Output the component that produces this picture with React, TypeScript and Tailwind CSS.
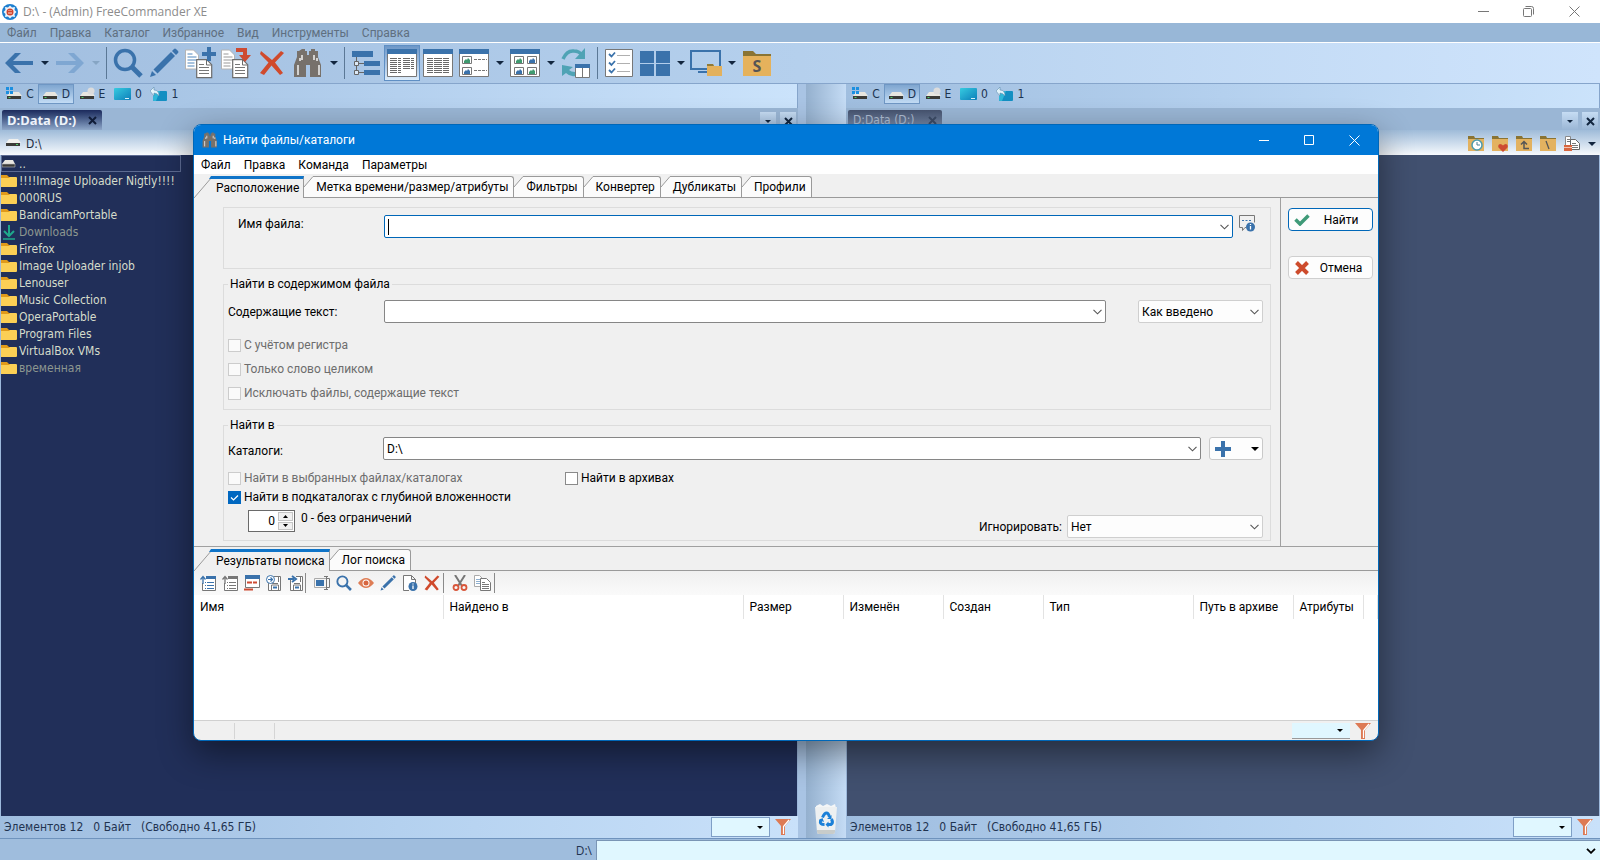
import React from 'react';
import clsx from 'clsx';

type IconProps = { className?: string };

/* ---------- small shared glyphs ---------- */

function Caret({ className = 'text-[#12263f]' }: IconProps) {
  return (
    <svg width="8" height="4" viewBox="0 0 8 4" className={className}>
      <path d="M0 0h8L4 4z" fill="currentColor" />
    </svg>
  );
}

function Chevron({ className = 'text-[#555]' }: IconProps) {
  return (
    <svg width="9" height="6" viewBox="0 0 9 6" className={className}>
      <path d="M.5.8l4 4 4-4" fill="none" stroke="currentColor" strokeWidth="1.1" />
    </svg>
  );
}

function Cross({ className }: IconProps) {
  return (
    <svg width="9" height="9" viewBox="0 0 9 9" className={className}>
      <path d="M1 1l7 7M8 1L1 8" stroke="currentColor" strokeWidth="2" />
    </svg>
  );
}

function Funnel() {
  return (
    <svg width="16" height="16" viewBox="0 0 16 16">
      <path d="M0 0h16l-6 7v9H6V7z" fill="#dd7a55" />
      <path d="M14 1L8.500 7.500V15" fill="none" stroke="#fff" strokeWidth="1.200" />
    </svg>
  );
}

function Binoculars({ size }: { size: number }) {
  return (
    <svg width={size} height={size} viewBox="0 0 30 30">
      <path
        d="M9 1h3v2h2v4h2V3h2V1h4v2h3v6l3 8v12H17V17h-4v12H1V17l3-8V3h2z"
        fill="#77716b"
      />
      <path d="M9 7v5M7 10v3M5 17v10M21 7v5M24 10v3M26 17v10" stroke="#f2f2f2" strokeWidth="1.500" />
    </svg>
  );
}

/* ---------- main toolbar icons ---------- */

function ArrowIcon({ dir, color }: { dir: 'left' | 'right'; color: string }) {
  return (
    <svg width="30" height="26" viewBox="0 0 30 26">
      <path
        d={dir === 'left' ? 'M29 11v4H9l8 8h-6L1 13 11 3h6L9 11z' : 'M1 11v4h20l-8 8h6l10-10L19 3h-6l8 8z'}
        fill={color}
      />
    </svg>
  );
}

function Magnifier({ size }: { size: number }) {
  return (
    <svg width={size} height={size} viewBox="0 0 30 30">
      <circle cx="12" cy="12" r="9.500" fill="none" stroke="#3a72ab" strokeWidth="3.500" />
      <path d="M19 19l9 9" stroke="#3a72ab" strokeWidth="5" />
    </svg>
  );
}

function Pencil({ size }: { size: number }) {
  return (
    <svg width={size} height={size} viewBox="0 0 30 30">
      <path d="M3 23l4 4-6 2zM4.500 21.500L22 4l4 4L8.500 25.500zM23 3l2-2q1-1 2 0l2 2q1 1 0 2l-2 2z" fill="#3a72ab" />
    </svg>
  );
}

function Sheet({ x, y }: { x: number; y: number }) {
  return (
    <g transform={`translate(${x} ${y})`}>
      <path d="M.7.7h10l5 5v13h-15z" fill="#fff" stroke="#6c6c6c" strokeWidth="1.200" />
      <path d="M10.500 1v5h5" fill="none" stroke="#6c6c6c" />
      <path d="M3 5.500h5M3 8.500h10M3 11.500h10M3 14.500h10" stroke="#777" />
    </g>
  );
}

function SheetsIcon({ kind }: { kind: 'copy' | 'move' }) {
  return (
    <svg width="32" height="32" viewBox="0 0 32 32">
      <path d="M1.500 3h8l5 5v14h-13z" fill="#fff" stroke="#b4b4b4" />
      <path d="M3.500 7h5M3.500 10h9M3.500 13h9M3.500 16h7M3.500 19h7" stroke={kind === 'copy' ? '#4f86bd' : '#999'} />
      <Sheet x={12} y={12} />
      {kind === 'copy' ? (
        <path d="M23 0h4v5h5v4h-5v5h-4V9h-5V5h5z" fill="#3a72ab" />
      ) : (
        <path d="M16 1h11v7h4l-6 7-6-7h4V5h-7z" fill="#cd4b32" />
      )}
    </svg>
  );
}

function DeleteIcon({ size }: { size: number }) {
  return (
    <svg width={size} height={size} viewBox="0 0 26 26">
      <path d="M2 1l11 9L22 1l3 2-9 9.500L24 23l-3 2-8.500-9.500L5 25l-4-2 8.500-10.500L1 4z" fill="#d04a2c" />
    </svg>
  );
}

function TreeIcon() {
  return (
    <svg width="30" height="28" viewBox="0 0 30 28">
      <path d="M1 2h21v6H1zM13 12h16v5H13zM13 21h16v5H13z" fill="#3a72ab" />
      <path d="M5.500 8v14M5.500 14.500H13M5.500 23.500H13" stroke="#666" fill="none" />
      <path d="M3.500 12.500h4v4h-4zM3.500 21.500h4v4h-4z" fill="#dce9f7" stroke="#666" />
    </svg>
  );
}

function ViewFrame({ children }: { children: React.ReactNode }) {
  return (
    <svg width="30" height="28" viewBox="0 0 30 28">
      <path d="M.5.5h29v27H.5z" fill="#fff" stroke="#777" />
      <path d="M0 0h30v5H0z" fill="#3a72ab" />
      {children}
    </svg>
  );
}

function DetailsIcon() {
  return (
    <ViewFrame>
      <path
        d="M3 9.500h11M3 11.500h11M3 13.500h11M3 15.500h11M3 17.500h11M3 19.500h11M3 21.500h11M3 23.500h11M16 9.500h11M16 11.500h11M16 13.500h11M16 15.500h11M16 17.500h11M16 19.500h11"
        stroke="#686868"
        strokeDasharray="7 1 3 1"
      />
    </ViewFrame>
  );
}

function ListIcon() {
  return (
    <ViewFrame>
      <path
        d="M4 9.500h22M4 11.500h22M4 13.500h22M4 15.500h22M4 17.500h22M4 19.500h22M4 21.500h22M4 23.500h22"
        stroke="#686868"
        strokeDasharray="6 1 8 1"
      />
    </ViewFrame>
  );
}

function Thumb({ x, y, color }: { x: number; y: number; color: string }) {
  return (
    <g transform={`translate(${x} ${y})`}>
      <path d="M.5.5h9v7h-9z" fill="#fff" stroke="#777" />
      <path d="M2 7V5l2-2 1 1 1-2 2 2v3z" fill={color} />
    </g>
  );
}

function ThumbListIcon() {
  return (
    <ViewFrame>
      <Thumb x={3} y={7} color="#3f9a70" />
      <Thumb x={3} y={18} color="#3a72ab" />
      <path d="M15 10.500h13M15 21.500h13" stroke="#777" strokeDasharray="3 1" />
    </ViewFrame>
  );
}

function ThumbGridIcon() {
  return (
    <ViewFrame>
      <Thumb x={4} y={7} color="#3f9a70" />
      <Thumb x={17} y={7} color="#3a72ab" />
      <Thumb x={4} y={18} color="#3a72ab" />
      <Thumb x={17} y={18} color="#3f9a70" />
    </ViewFrame>
  );
}

function SyncIcon() {
  return (
    <svg width="30" height="32" viewBox="0 0 30 32">
      <path d="M2 12Q6 3 13 4q5 0 8 4" fill="none" stroke="#4fa3b5" strokeWidth="3.500" />
      <path d="M24 1v11H14z" fill="#4fa3b5" />
      <path d="M1 18v11l4-3q4 4 9 3v-4q-4 0-6-2l4-3z" fill="#4fa3b5" />
      <path d="M14.500 17.500h14v13h-14z" fill="#fff" stroke="#777" />
      <path d="M14 17h15v4H14z" fill="#3a72ab" />
      <path d="M21.500 21v10" stroke="#777" />
    </svg>
  );
}

function ChecklistIcon() {
  return (
    <svg width="28" height="28" viewBox="0 0 28 28">
      <path d="M.5.500h27v27H.5z" fill="#fff" stroke="#777" />
      <path d="M4 5l2.500 2.500L10 3.500M4 13.500L6.500 16l3.500-4M4 21l2.500 2.500L10 19.500" fill="none" stroke="#3a72ab" strokeWidth="1.800" />
      <path d="M12 6.500h13M12 14.500h13M12 22.500h13" stroke="#b0b0b0" />
    </svg>
  );
}

function TilesIcon() {
  return (
    <svg width="30" height="25" viewBox="0 0 30 25">
      <path d="M0 0h14v12H0zM16 0h14v12H16zM0 13h14v12H0zM16 13h14v12H16z" fill="#3a72ab" />
    </svg>
  );
}

function MonitorIcon() {
  return (
    <svg width="33" height="28" viewBox="0 0 33 28">
      <path d="M1 2h29v18H1z" fill="none" stroke="#3a72ab" strokeWidth="2" />
      <path d="M8 23h11" stroke="#3a72ab" strokeWidth="2" />
      <path d="M17 15h6l1 2h8v10H17z" fill="#e3b15d" />
      <path d="M17 15h6l1 2h-7z" fill="#8f7a38" />
    </svg>
  );
}

function FolderSIcon() {
  return (
    <svg width="28" height="26" viewBox="0 0 28 26">
      <path d="M0 1h10l3 3h15v4H0z" fill="#8a7433" />
      <path d="M0 6h28v20H0z" fill="#e5b25c" />
      <text x="14" y="22" textAnchor="middle" fontSize="16" fontWeight="bold" fill="#555">
        S
      </text>
    </svg>
  );
}

function ToolButton({ label, active, children }: { label: string; active?: boolean; children: React.ReactNode }) {
  return (
    <button
      aria-label={label}
      className={clsx(
        'flex h-9 w-9 shrink-0 items-center justify-center',
        active && 'border border-[#5f8fc4] bg-linear-to-b from-[#6d97c8] to-[#dcecfb]'
      )}
    >
      {children}
    </button>
  );
}

function DropArrow({ dim }: { dim?: boolean }) {
  return (
    <button aria-label="Список" className="flex h-9 w-[15px] shrink-0 items-center justify-center">
      <Caret className={dim ? 'text-[#86a5c4]' : 'text-[#12263f]'} />
    </button>
  );
}

function ToolSeparator() {
  return (
    <div className="flex h-8 w-[7px] shrink-0 justify-center">
      <div className="w-px bg-[#5b7896]" />
    </div>
  );
}

function MainToolbar() {
  return (
    <div className="flex h-[41px] items-center border-b border-[#86a5cb] bg-linear-to-r from-[#a2bfe0] via-[#b5d0ed] to-[#cfe4fc] pl-px">
      <ToolButton label="Назад">
        <ArrowIcon dir="left" color="#3a72ab" />
      </ToolButton>
      <DropArrow />
      <ToolButton label="Вперёд">
        <ArrowIcon dir="right" color="#7fa7d2" />
      </ToolButton>
      <DropArrow dim />
      <ToolSeparator />
      <ToolButton label="Просмотр">
        <Magnifier size={30} />
      </ToolButton>
      <ToolButton label="Редактировать">
        <Pencil size={30} />
      </ToolButton>
      <ToolButton label="Копировать">
        <SheetsIcon kind="copy" />
      </ToolButton>
      <ToolButton label="Переместить">
        <SheetsIcon kind="move" />
      </ToolButton>
      <ToolButton label="Удалить">
        <DeleteIcon size={26} />
      </ToolButton>
      <ToolButton label="Поиск">
        <Binoculars size={30} />
      </ToolButton>
      <DropArrow />
      <ToolSeparator />
      <ToolButton label="Дерево">
        <TreeIcon />
      </ToolButton>
      <ToolButton label="Подробно" active>
        <DetailsIcon />
      </ToolButton>
      <ToolButton label="Список файлов">
        <ListIcon />
      </ToolButton>
      <ToolButton label="Эскизы со сведениями">
        <ThumbListIcon />
      </ToolButton>
      <DropArrow />
      <ToolButton label="Эскизы">
        <ThumbGridIcon />
      </ToolButton>
      <DropArrow />
      <ToolButton label="Синхронизация">
        <SyncIcon />
      </ToolButton>
      <ToolSeparator />
      <ToolButton label="Выделение">
        <ChecklistIcon />
      </ToolButton>
      <ToolButton label="Раскладка">
        <TilesIcon />
      </ToolButton>
      <DropArrow />
      <ToolButton label="Рабочий стол">
        <MonitorIcon />
      </ToolButton>
      <DropArrow />
      <ToolButton label="Настройки">
        <FolderSIcon />
      </ToolButton>
    </div>
  );
}

/* ---------- file panels ---------- */

function DriveIcon({ kind }: { kind: 'system' | 'plain' | 'user' }) {
  return (
    <svg width="16" height="14" viewBox="0 0 16 14">
      <path d="M4 5h9l3 4H1z" fill="#e8e6e0" />
      <path d="M1 9h14v3H1z" fill="#3b3b38" />
      <path d="M2.500 10.500h2" stroke="#4fd06a" />
      {kind === 'system' && <path d="M0 0h3v3H0zM4 0h3v3H4zM0 4h3v3H0zM4 4h3v3H4z" fill="#1b8fe0" />}
      {kind === 'user' && <circle cx="12" cy="4" r="3.500" fill="#dcdcdc" />}
    </svg>
  );
}

function DesktopIcon() {
  return (
    <svg width="17" height="13" viewBox="0 0 17 13">
      <defs>
        <linearGradient id="desk" x1="0" y1="0" x2="1" y2="1">
          <stop offset="0" stopColor="#36cbe0" />
          <stop offset="1" stopColor="#0d7fba" />
        </linearGradient>
      </defs>
      <rect width="17" height="12" rx="1" fill="url(#desk)" />
      <path d="M11 10.500h4" stroke="#d6f1fa" />
    </svg>
  );
}

function ShareIcon() {
  return (
    <svg width="18" height="15" viewBox="0 0 18 15">
      <rect x="3" y="4" width="14" height="10" rx="1" fill="#138fc2" />
      <path d="M4 4h6l-4 10H4q-1 0-1-1V5z" fill="#2fb7d8" />
      <path d="M4 0v3q5 0 5 6-2-3-5-3v3L0 4z" fill="#e3f3fa" stroke="#5f8fb0" strokeWidth=".6" />
    </svg>
  );
}

const drives = [
  { label: 'C', icon: <DriveIcon kind="system" /> },
  { label: 'D', icon: <DriveIcon kind="plain" /> },
  { label: 'E', icon: <DriveIcon kind="user" /> },
  { label: '0', icon: <DesktopIcon /> },
  { label: '1', icon: <ShareIcon /> },
];

function DriveBar() {
  return (
    <div className="flex h-6 items-start border-r border-[#86a5cb] bg-linear-to-r from-[#a0bedf] via-[#b4d0ee] to-[#cbe3fb] pl-0.5">
      {drives.map((d) => (
        <button
          key={d.label}
          className={clsx(
            'flex h-5 w-9 items-center justify-center gap-1 border text-[12px] leading-4 text-[#1b3350]',
            d.label === 'D'
              ? 'border-[#6f97c4] bg-linear-to-b from-[#7fa6d0] to-[#c3dcf5]'
              : 'border-transparent'
          )}
        >
          {d.icon}
          {d.label}
        </button>
      ))}
    </div>
  );
}

function TabBar({ inactive }: { inactive?: boolean }) {
  return (
    <div className="flex h-[22px] items-end justify-between bg-[#9ab6d5] pl-0.5">
      <div
        className={clsx(
          'flex h-5 items-center justify-between rounded-t-xs bg-linear-to-b px-[5px] leading-4',
          inactive
            ? 'w-[94px] from-[#46536f] to-[#8298b8] text-[12px] text-[#aebdd2]'
            : "w-[100px] from-[#1c2a5c] to-[#8fa8c9] font-['Noto_Sans',sans-serif] text-[13px] font-bold text-[#eef3fa]"
        )}
      >
        <span>D:Data (D:)</span>
        <button aria-label="Закрыть вкладку">
          <Cross className={inactive ? 'text-[#3c4b66]' : 'text-[#101c38]'} />
        </button>
      </div>
      <div className="flex gap-1 pr-0.5">
        <button aria-label="Список вкладок" className="flex h-[18px] w-4 items-center justify-center bg-linear-to-b from-[#c6dcf3] to-[#9ab6d5]">
          <svg width="6" height="3" viewBox="0 0 6 3">
            <path d="M0 0h6L3 3z" fill="#12263f" />
          </svg>
        </button>
        <button aria-label="Закрыть" className="flex h-[18px] w-4 items-center justify-center bg-linear-to-b from-[#c6dcf3] to-[#9ab6d5]">
          <Cross className="text-[#12263f]" />
        </button>
      </div>
    </div>
  );
}

function MiniFolder({ children }: { children: React.ReactNode }) {
  return (
    <svg width="16" height="16" viewBox="0 0 16 16">
      <path d="M0 0h6l1 2h9v3H0z" fill="#8a7433" />
      <path d="M0 3h16v12H0z" fill="#e3b260" />
      {children}
    </svg>
  );
}

function PathIcons() {
  return (
    <div className="flex items-center gap-2">
      <MiniFolder>
        <circle cx="9" cy="9" r="5" fill="#fff" stroke="#4a9bb0" strokeWidth="1.500" />
        <path d="M9 6v3h3" fill="none" stroke="#4a7f95" />
      </MiniFolder>
      <MiniFolder>
        <path d="M11 16L6.500 11.500q-1-3 1.500-3.500 2 0 3 1.500 1-1.500 3-1.500 2.500.5 1.500 3.500z" fill="#cd4b32" />
      </MiniFolder>
      <MiniFolder>
        <path d="M5 8.500L8 5.500l3 3M8 6v6.500h5" fill="none" stroke="#555" strokeWidth="1.500" />
      </MiniFolder>
      <MiniFolder>
        <path d="M6 5l3 8" stroke="#555" strokeWidth="1.300" />
      </MiniFolder>
      <svg width="16" height="16" viewBox="0 0 16 16">
        <path d="M1.500.5h5v10h-5z" fill="#fff" stroke="#8a8a8a" />
        <path d="M6.500 3.500h5l4 4v6h-9z" fill="#fff" stroke="#666" />
        <path d="M8 7.500h4M8 9.500h6M8 11.500h6M3 3.500h3M3 5.500h3" stroke="#777" />
        <path d="M0 9h8v6H0z" fill="#d8663f" />
        <path d="M0 11.500h8" stroke="#f3c4b2" />
      </svg>
      <Caret />
    </div>
  );
}

function PathBar({ withIcons }: { withIcons?: boolean }) {
  return (
    <div className="flex h-[25px] items-center justify-between bg-linear-to-b from-[#9fbbd9] to-[#f7fafd] pt-0.5 pr-1 pl-[5px] text-[12px] text-[#1c2b3d]">
      <span className="flex items-center gap-[5px]">
        <svg width="16" height="10" viewBox="0 0 16 10">
          <path d="M4 0h9l3 4H1z" fill="#f1f1ee" />
          <path d="M1 4h14v3H1z" fill="#3b3b38" />
          <path d="M11 5.500h2" stroke="#4fd06a" />
        </svg>
        D:\
      </span>
      {withIcons && <PathIcons />}
    </div>
  );
}

function FolderIcon() {
  return (
    <svg width="17" height="14" viewBox="0 0 17 14">
      <path d="M0 1h6l2 2h7v3H0z" fill="#e09a1a" />
      <path d="M0 4h8l1-1h6q1 0 1 1v8q0 1-1 1H0z" fill="#fbcf55" />
    </svg>
  );
}

function DownloadsIcon() {
  return (
    <svg width="17" height="16" viewBox="0 0 17 16">
      <path d="M8 1v10M3 7l5 5 5-5" fill="none" stroke="#1fa98c" strokeWidth="2" />
      <path d="M2 15h12" stroke="#1fa98c" strokeWidth="1.500" />
    </svg>
  );
}

const files = [
  { name: '!!!!Image Uploader Nigtly!!!!' },
  { name: '000RUS' },
  { name: 'BandicamPortable' },
  { name: 'Downloads', muted: true, downloads: true },
  { name: 'Firefox' },
  { name: 'Image Uploader injob' },
  { name: 'Lenouser' },
  { name: 'Music Collection' },
  { name: 'OperaPortable' },
  { name: 'Program Files' },
  { name: 'VirtualBox VMs' },
  { name: 'временная', muted: true },
];

function FileList() {
  return (
    <ul className="text-[12px] leading-4 text-[#d5dccb]">
      <li className="flex h-[17px] w-[180px] items-center gap-[3px] border border-[#5d6b92]">
        <svg width="14" height="10" viewBox="0 0 14 10">
          <path d="M3 1h8l2 4H0z" fill="#e8e6e0" />
          <path d="M0 5h13v3H0z" fill="#3b3b38" stroke="#bbb" strokeWidth=".6" />
        </svg>
        ..
      </li>
      {files.map((f) => (
        <li key={f.name} className={clsx('flex h-[17px] items-center gap-px whitespace-pre', f.muted && 'text-[#8d9790]')}>
          {f.downloads ? <DownloadsIcon /> : <FolderIcon />}
          {f.name}
        </li>
      ))}
    </ul>
  );
}

function FilterBox() {
  return (
    <div className="flex items-center gap-[5px]">
      <button aria-label="Фильтр" className="flex h-5 w-[59px] items-center justify-end border border-[#7f9fc6] bg-[#e0f7ff] pr-1.5">
        <svg width="6" height="3" viewBox="0 0 6 3">
          <path d="M0 0h6L3 3z" fill="#000" />
        </svg>
      </button>
      <Funnel />
    </div>
  );
}

function PanelStatus() {
  return (
    <div className="flex h-[22px] items-center justify-between bg-linear-to-r from-[#9fbddf] via-[#b4d1ef] to-[#c9e1fa] pr-[7px] pl-1 text-[12px] text-[#1f3350]">
      <span className="flex gap-2.5 whitespace-nowrap">
        <span>Элементов 12</span>
        <span>0 Байт</span>
        <span>(Свободно 41,65 ГБ)</span>
      </span>
      <FilterBox />
    </div>
  );
}

function RecycleBin() {
  return (
    <svg width="24" height="32" viewBox="0 0 24 32">
      <path d="M2 3l4-2 3 2 4-2 4 2 4-2 1 4H2z" fill="#f4f6f7" />
      <path d="M1 4h22l-2 25q0 2-2 2H5q-2 0-2-2z" fill="#edf0f1" />
      <path d="M3 27h18v2q0 2-2 2H5q-2 0-2-2z" fill="#c8ccca" />
      <path
        d="M8.500 14.500q2-4.500 4-4.500t3 4M17.500 16q2 4-.5 5.500h-3.500M10.500 21.500q-5 0-4-3.500l1-1.500"
        fill="none"
        stroke="#1b80d8"
        strokeWidth="3"
      />
      <path d="M17.500 12v4h-4.500zM14.500 18.500v6l-3-3zM5 17l3.500-2 1.500 4z" fill="#1b80d8" />
    </svg>
  );
}

function Panel({ inactive, className }: { inactive?: boolean; className: string }) {
  return (
    <section className={clsx('flex min-w-0 flex-col', className)}>
      <DriveBar />
      <TabBar inactive={inactive} />
      <PathBar withIcons={inactive} />
      <div className={clsx('flex-1 border-x border-[#9db9dc]', inactive ? 'bg-[#41506f]' : 'bg-[#212f59]')}>
        {!inactive && <FileList />}
      </div>
      <PanelStatus />
    </section>
  );
}

/* ---------- search dialog ---------- */

const tabLine = '#9a9a9a';

function SlantTab({ label, active }: { label: string; active?: boolean }) {
  if (active) {
    return (
      <button role="tab" aria-selected className="flex h-full">
        <svg width="20" height="22" viewBox="0 0 20 22">
          <path d="M0 22L18 1h2v21z" fill="#f0f0f0" />
          <path d="M0 22L18 1" stroke={tabLine} fill="none" />
          <path d="M17 0h3v3h-5z" fill="#0f74c8" />
        </svg>
        <span className="flex h-full items-center border-t-3 border-r border-t-[#0f74c8] border-r-[#9a9a9a] bg-[#f0f0f0] pr-1 pb-0.5 pl-0.5">
          {label}
        </span>
      </button>
    );
  }
  return (
    <button role="tab" aria-selected={false} className="flex h-full border-b border-[#9a9a9a]">
      <svg width="11" height="21" viewBox="0 0 11 21">
        <path d="M0 11L9 .5h2V21H0z" fill="#fbfbfb" />
        <path d="M0 11L9 .5h2" stroke={tabLine} fill="none" />
      </svg>
      <span className="flex h-full items-center rounded-tr-[3px] border-t border-r border-[#9a9a9a] bg-[#fbfbfb] pr-[5px] pl-px">
        {label}
      </span>
    </button>
  );
}

function TabStrip({ tabs }: { tabs: string[] }) {
  return (
    <div role="tablist" className="flex h-[22px]">
      {tabs.map((t, i) => (
        <SlantTab key={t} label={t} active={i === 0} />
      ))}
      <div className="flex-1 border-b border-[#9a9a9a]" />
    </div>
  );
}

type ComboProps = { id: string; label: string; value?: string; focused?: boolean };

function Combo({ id, label, value = '', focused }: ComboProps) {
  return (
    <div
      className={clsx(
        'flex h-[23px] flex-1 items-center rounded-xs border bg-white px-[3px]',
        focused ? 'border-[#0067b8]' : 'border-[#868686]'
      )}
    >
      {focused && <span className="h-4 w-px bg-black" />}
      <input id={id} aria-label={label} defaultValue={value} className="min-w-0 flex-1 outline-none" />
      <button aria-label="Открыть список">
        <Chevron />
      </button>
    </div>
  );
}

function SelectBox({ id, label, value, className }: { id: string; label: string; value: string; className: string }) {
  return (
    <div className={clsx('relative', className)}>
      <select
        id={id}
        aria-label={label}
        defaultValue={value}
        className="h-[23px] w-full appearance-none rounded-xs border border-[#cfcfcf] bg-[#fdfdfd] pl-[3px]"
      >
        <option>{value}</option>
      </select>
      <span className="pointer-events-none absolute inset-y-0 right-1 flex items-center">
        <Chevron />
      </span>
    </div>
  );
}

function Check({ id, label, checked, disabled }: { id: string; label: string; checked?: boolean; disabled?: boolean }) {
  return (
    <div className="flex h-4 items-center gap-[3px]">
      <span className="relative flex size-[13px]">
        <input
          id={id}
          type="checkbox"
          defaultChecked={checked}
          disabled={disabled}
          className="size-[13px] appearance-none border border-[#8a8a8a] bg-white checked:border-[#0067c0] checked:bg-[#0067c0] disabled:border-[#cccccc] disabled:bg-[#fafafa]"
        />
        {checked && (
          <svg width="13" height="13" viewBox="0 0 13 13" className="pointer-events-none absolute inset-0">
            <path d="M3 6.500L5.500 9l4.500-4.500" fill="none" stroke="#fff" strokeWidth="1.200" />
          </svg>
        )}
      </span>
      <label htmlFor={id} className={disabled ? 'text-[#6d6d6d]' : undefined}>
        {label}
      </label>
    </div>
  );
}

function HintIcon() {
  return (
    <svg width="16" height="17" viewBox="0 0 16 17">
      <path d="M7 12.500H6l-2.500 3v-3H.5V.5h15v7" fill="none" stroke="#777" />
      <path d="M3 5.500h2M6.500 5.500h2M10 5.500h2" stroke="#3a72ab" />
      <circle cx="11.500" cy="12" r="4.500" fill="#3a72ab" />
      <path d="M11.500 11v3.500M11.500 9v1" stroke="#fff" strokeWidth="1.300" />
    </svg>
  );
}

function SearchForm() {
  return (
    <div className="flex-1 border-r border-b border-[#a0a0a0] pt-[9px] pr-[9px] pb-[5px] pl-[29px]">
      <div className="flex h-[62px] items-start border border-[#dcdcdc] px-3.5 pt-[7px]">
        <label htmlFor="file-name" className="w-[146px] pt-px">
          Имя файла:
        </label>
        <Combo id="file-name" label="Имя файла" focused />
        <button aria-label="Подсказка" className="ml-1.5 pr-px">
          <HintIcon />
        </button>
      </div>

      <fieldset className="mt-[7px] border border-[#dcdcdc] pr-[7px] pb-2 pl-1">
        <legend className="px-0.5 leading-4">Найти в содержимом файла</legend>
        <div className="flex items-center pt-2">
          <label htmlFor="text" className="w-[156px]">
            Содержащие текст:
          </label>
          <Combo id="text" label="Содержащие текст" />
          <SelectBox id="text-mode" label="Режим" value="Как введено" className="ml-8 w-[125px]" />
        </div>
        <div className="flex flex-col gap-2 pt-3.5">
          <Check id="case" label="С учётом регистра" disabled />
          <Check id="whole" label="Только слово целиком" disabled />
          <Check id="exclude" label="Исключать файлы, содержащие текст" disabled />
        </div>
      </fieldset>

      <fieldset className="mt-[7px] border border-[#dcdcdc] pr-[7px] pb-0.5 pl-1">
        <legend className="px-0.5 leading-4">Найти в</legend>
        <div className="flex items-center pt-1">
          <label htmlFor="dirs" className="w-[155px] pt-1">
            Каталоги:
          </label>
          <Combo id="dirs" label="Каталоги" value="D:\" />
          <button aria-label="Добавить" className="ml-2 flex h-[23px] w-[54px] items-center justify-between rounded-[3px] border border-[#c9c9c9] bg-[#fdfdfd] pr-[3px] pl-[5px]">
            <svg width="16" height="16" viewBox="0 0 16 16">
              <path d="M6 0h4v6h6v4h-6v6H6v-6H0V6h6z" fill="#3a72ab" />
            </svg>
            <Caret className="text-black" />
          </button>
        </div>
        <div className="flex pt-2.5">
          <div className="w-[337px]">
            <Check id="selected" label="Найти в выбранных файлах/каталогах" disabled />
          </div>
          <Check id="archives" label="Найти в архивах" />
        </div>
        <div className="pt-[3px]">
          <Check id="subdirs" label="Найти в подкаталогах с глубиной вложенности" checked />
        </div>
        <div className="flex items-start justify-between pt-[5px]">
          <div className="flex items-start gap-1.5 pl-5">
            <div className="flex h-[22px] w-[47px] items-center border border-[#6a6a6a] bg-white p-px">
              <input id="depth" aria-label="Глубина" defaultValue="0" className="w-7 min-w-0 pr-[3px] text-right outline-none" />
              <span className="flex h-full flex-1 flex-col gap-px">
                <button aria-label="Больше" className="flex flex-1 items-center justify-center border border-[#c4c4c4] bg-[#f0f0f0]">
                  <svg width="5" height="3" viewBox="0 0 5 3">
                    <path d="M0 3h5L2.500 0z" />
                  </svg>
                </button>
                <button aria-label="Меньше" className="flex flex-1 items-center justify-center border border-[#c4c4c4] bg-[#f0f0f0]">
                  <svg width="5" height="3" viewBox="0 0 5 3">
                    <path d="M0 0h5L2.500 3z" />
                  </svg>
                </button>
              </span>
            </div>
            <label htmlFor="depth">0 - без ограничений</label>
          </div>
          <div className="flex items-center gap-[5px] pt-[5px]">
            <label htmlFor="ignore">Игнорировать:</label>
            <SelectBox id="ignore" label="Игнорировать" value="Нет" className="w-[196px]" />
          </div>
        </div>
      </fieldset>
    </div>
  );
}

function DialogButtons() {
  return (
    <div className="flex w-[97px] flex-col gap-[25px] border-b border-[#a0a0a0] pt-2.5 pr-[5px] pl-[7px]">
      <button className="flex h-[23px] items-center rounded-[4px] border border-[#0067b8] bg-[#fdfdfd] pl-[5px]">
        <svg width="16" height="12" viewBox="0 0 16 12">
          <path d="M1.500 5.500l4.500 4.500 8.500-8.500" fill="none" stroke="#3f9a78" strokeWidth="3.500" />
        </svg>
        <span className="flex-1 text-center">Найти</span>
      </button>
      <button className="flex h-[23px] items-center rounded-[4px] border border-[#cfcfcf] bg-[#fdfdfd] pl-[5px]">
        <svg width="16" height="14" viewBox="0 0 16 14">
          <path d="M2.500 1.500l11 11M13.500 1.500l-11 11" stroke="#cd4b2c" strokeWidth="4" />
        </svg>
        <span className="flex-1 text-center">Отмена</span>
      </button>
    </div>
  );
}

/* ---------- results toolbar ---------- */

function ListGlyph({ color, arrow, red }: { color: string; arrow?: boolean; red?: boolean }) {
  return (
    <svg width="16" height="16" viewBox="0 0 16 16">
      <path d={arrow ? 'M6 1.500h9.500v14h-13V8' : 'M1.500 1.500h14v11H1.500z'} fill="#fff" stroke="#777" />
      <path d={arrow ? 'M6 1h10v3H6z' : 'M1 0h15v4H1z'} fill={color} />
      {red ? (
        <path d="M3 7.500h5M9 7.500h4M0 14.500h9" stroke="#cd4b32" strokeWidth="2" />
      ) : (
        <path d="M5 7.500h1M7 7.500h7M5 10.500h1M7 10.500h7M5 13.500h1M7 13.500h7" stroke={color} />
      )}
      {arrow && <path d="M.5 4.500L3 1.500l2.500 3M3 2v7" fill="none" stroke={color} strokeWidth="1.300" />}
    </svg>
  );
}

function SaveGlyph({ open }: { open?: boolean }) {
  return (
    <svg width="16" height="16" viewBox="0 0 16 16">
      <path d="M2.500 5v10.500h12v-14H8" fill="#fff" stroke="#777" />
      <path d="M6 8.500h6M5.500 15v-5h7v5M12.500 2v5" fill="none" stroke="#777" />
      <path d="M7 12.500h4" stroke="#3a72ab" strokeWidth="2" />
      {open ? (
        <path d="M0 4h6M4 1l4 3-4 3" fill="none" stroke="#3a72ab" strokeWidth="2" />
      ) : (
        <>
          <circle cx="4.500" cy="4.500" r="4" fill="#fff" stroke="#3a72ab" />
          <path d="M2 4.500h4M4.500 2.500l2 2-2 2" fill="none" stroke="#3a72ab" strokeWidth="1.200" />
        </>
      )}
    </svg>
  );
}

function ResultsSeparator() {
  return <div className="h-5 w-px bg-[#8a8a8a]" />;
}

function ResultsToolbar() {
  return (
    <div className="flex h-6 items-center bg-linear-to-b from-[#f0f0f0] to-[#fafafa] pl-1.5 *:shrink-0">
      <div className="flex gap-[6px] pr-px">
        <button aria-label="Добавить все">
          <ListGlyph color="#3a72ab" arrow />
        </button>
        <button aria-label="Добавить">
          <ListGlyph color="#777" arrow />
        </button>
        <button aria-label="Убрать">
          <ListGlyph color="#3a72ab" red />
        </button>
        <button aria-label="Загрузить">
          <SaveGlyph />
        </button>
        <button aria-label="Сохранить">
          <SaveGlyph open />
        </button>
      </div>
      <ResultsSeparator />
      <div className="flex gap-[6px] pr-[3px] pl-2">
        <button aria-label="Переименовать">
          <svg width="16" height="16" viewBox="0 0 16 16">
            <path d="M12 3.500H.5v9H12" fill="none" stroke="#aaa" />
            <path d="M2 5h8v6H2z" fill="#3a72ab" />
            <path d="M10 1.500h4M10 14.500h4M12.500 2v12M13 3.500h2.500v9H13" fill="none" stroke="#777" />
          </svg>
        </button>
        <button aria-label="Просмотр">
          <Magnifier size={16} />
        </button>
        <button aria-label="Показать">
          <svg width="16" height="16" viewBox="0 0 16 16">
            <path d="M0 8q8-10 16 0-8 10-16 0z" fill="#de7d55" />
            <circle cx="8" cy="8" r="3.500" fill="#fff" />
            <circle cx="8" cy="8" r="2.500" fill="#d8663f" />
          </svg>
        </button>
        <button aria-label="Правка">
          <Pencil size={16} />
        </button>
        <button aria-label="Свойства">
          <svg width="16" height="16" viewBox="0 0 16 16">
            <path d="M7 15.500H1.500V.500h8l4 4V8M9.500.500v4h4" fill="#fff" stroke="#777" />
            <circle cx="11" cy="11.500" r="4.500" fill="#3a72ab" />
            <path d="M11 10.500V14M11 8.500v1" stroke="#fff" strokeWidth="1.300" />
          </svg>
        </button>
        <button aria-label="Удалить">
          <DeleteIcon size={16} />
        </button>
      </div>
      <ResultsSeparator />
      <div className="flex gap-[6px] pr-[3px] pl-2">
        <button aria-label="Вырезать">
          <svg width="16" height="16" viewBox="0 0 16 16">
            <path d="M3 0l7 11M13 0L6 11" stroke="#777" strokeWidth="2" />
            <circle cx="4" cy="12.500" r="2.500" fill="none" stroke="#d8563a" strokeWidth="1.800" />
            <circle cx="12" cy="12.500" r="2.500" fill="none" stroke="#d8563a" strokeWidth="1.800" />
          </svg>
        </button>
        <button aria-label="Копировать">
          <svg width="17" height="16" viewBox="0 0 17 16">
            <path d="M.5.5h5l3 3v8h-8z" fill="#fff" stroke="#aaa" />
            <path d="M2 4.500h4M2 6.500h4M2 8.500h4" stroke="#8fb0d0" />
            <path d="M6.500 3.500h6l4 4v8h-10z" fill="#fff" stroke="#777" />
            <path d="M8 7.500h3M8 9.500h7M8 11.500h7M8 13.500h7" stroke="#777" />
          </svg>
        </button>
      </div>
      <ResultsSeparator />
    </div>
  );
}

function ResultsTable() {
  return (
    <div className="flex-1 bg-white">
      <table className="w-full table-fixed text-left">
        <colgroup>
          <col className="w-[249px]" />
          <col className="w-[300px]" />
          <col className="w-[100px]" />
          <col className="w-[100px]" />
          <col className="w-[100px]" />
          <col className="w-[150px]" />
          <col className="w-[100px]" />
          <col className="w-[70px]" />
          <col />
        </colgroup>
        <thead>
          <tr className="h-6 *:border-r *:border-[#e3e3e3] *:p-0 *:pl-1.5 *:font-normal *:whitespace-nowrap">
            <th>Имя</th>
            <th>Найдено в</th>
            <th>Размер</th>
            <th>Изменён</th>
            <th>Создан</th>
            <th>Тип</th>
            <th>Путь в архиве</th>
            <th>Атрибуты</th>
            <td className="border-r-0" />
          </tr>
        </thead>
      </table>
    </div>
  );
}

function SearchDialog() {
  return (
    <div
      role="dialog"
      aria-label="Найти файлы/каталоги"
      className="absolute top-[124px] right-[221px] bottom-[119px] left-[193px] flex flex-col overflow-hidden rounded-lg border border-[#0067b8] bg-[#f0f0f0] font-[Roboto,'Noto_Sans',sans-serif] text-[12px] leading-4 text-black shadow-[0_12px_34px_rgba(0,0,0,0.45)]"
    >
      <div className="flex h-[30px] shrink-0 items-center bg-[#0078d7] pl-2 text-white">
        <Binoculars size={16} />
        <span className="flex-1 pl-[5px]">Найти файлы/каталоги</span>
        <button aria-label="Свернуть" className="flex w-[45px] justify-center">
          <svg width="10" height="10" viewBox="0 0 10 10">
            <path d="M0 5.500h10" stroke="#fff" />
          </svg>
        </button>
        <button aria-label="Развернуть" className="flex w-[45px] justify-center">
          <svg width="10" height="10" viewBox="0 0 10 10">
            <path d="M.5.5h9v9h-9z" fill="none" stroke="#fff" />
          </svg>
        </button>
        <button aria-label="Закрыть" className="flex w-[47px] justify-center">
          <svg width="11" height="11" viewBox="0 0 11 11">
            <path d="M.5.5l10 10M10.500.5l-10 10" stroke="#fff" />
          </svg>
        </button>
      </div>
      <nav className="flex h-[19px] shrink-0 items-center gap-[13px] bg-white pl-[7px]">
        <button>Файл</button>
        <button>Правка</button>
        <button>Команда</button>
        <button>Параметры</button>
      </nav>
      <div className="shrink-0 pt-0.5">
        <TabStrip tabs={['Расположение', 'Метка времени/размер/атрибуты', 'Фильтры', 'Конвертер', 'Дубликаты', 'Профили']} />
      </div>
      <div className="flex shrink-0">
        <SearchForm />
        <DialogButtons />
      </div>
      <div className="shrink-0 pt-0.5">
        <TabStrip tabs={['Результаты поиска', 'Лог поиска']} />
      </div>
      <ResultsToolbar />
      <ResultsTable />
      <div className="flex h-5 shrink-0 items-center border-t border-[#d0d0d0]">
        <div className="h-4 w-[41px] border-r border-[#d5d5d5]" />
        <div className="h-4 w-10 flex-none border-r border-[#d5d5d5]" />
        <div className="flex flex-1 items-center justify-end gap-[5px] pr-[7px]">
          <button aria-label="Фильтр результатов" className="flex h-4 w-[58px] items-center justify-end border-b border-[#999] bg-[#e0f7ff] pr-[7px]">
            <svg width="6" height="3" viewBox="0 0 6 3">
              <path d="M0 0h6L3 3z" />
            </svg>
          </button>
          <Funnel />
        </div>
      </div>
    </div>
  );
}

/* ---------- window ---------- */

function TitleBar() {
  return (
    <header className="flex h-[23px] items-center bg-white pr-[3px] pl-0.5 text-[12px] text-[#8c8c8c]">
      <svg width="16" height="16" viewBox="0 0 16 16">
        <circle cx="8" cy="8" r="8" fill="#1c7fd0" />
        <path d="M8 1.500l2 2 3-.5-.5 3 2 2-2 2 .5 3-3-.5-2 2-2-2-3 .5.5-3-2-2 2-2-.5-3 3 .5z" fill="#eef4fa" />
        <circle cx="8" cy="8" r="3.500" fill="#d0432c" />
        <path d="M6 9h4M6.500 6.500h1M8.500 6.500h1" stroke="#f7d9cf" />
      </svg>
      <h1 className="flex-1 pl-[5px]">D:\ - (Admin) FreeCommander XE</h1>
      <button aria-label="Свернуть" className="flex w-[45px] justify-center">
        <svg width="11" height="11" viewBox="0 0 11 11">
          <path d="M0 5.500h11" stroke="#777" />
        </svg>
      </button>
      <button aria-label="Восстановить" className="flex w-[45px] justify-center">
        <svg width="11" height="11" viewBox="0 0 11 11">
          <rect x=".5" y="2.500" width="8" height="8" rx="1" fill="none" stroke="#777" />
          <path d="M2.500.5h6q2 0 2 2v6" fill="none" stroke="#777" />
        </svg>
      </button>
      <button aria-label="Закрыть" className="flex w-[46px] justify-center">
        <svg width="11" height="11" viewBox="0 0 11 11">
          <path d="M.5.5l10 10M10.500.5l-10 10" stroke="#777" />
        </svg>
      </button>
    </header>
  );
}

const menu = ['Файл', 'Правка', 'Каталог', 'Избранное', 'Вид', 'Инструменты', 'Справка'];

export default function App() {
  return (
    <div className="relative flex h-screen flex-col overflow-hidden bg-[#a5c2e2] font-['Open_Sans','Noto_Sans',sans-serif] text-black">
      <TitleBar />
      <nav className="flex h-5 items-center gap-[13px] border-b border-white bg-[#98b7d7] pl-[7px] font-[Roboto,'Noto_Sans',sans-serif] text-[12px] text-[#5f6f80]">
        {menu.map((m) => (
          <button key={m}>{m}</button>
        ))}
      </nav>
      <MainToolbar />
      <main className="flex min-h-0 flex-1 font-['DejaVu_Sans_Condensed','DejaVu_Sans',sans-serif]">
        <Panel className="flex-[798_1_0%]" />
        <div className="flex w-12 flex-col items-center justify-end border-l-8 border-[#a9c4e4] bg-linear-to-r from-[#94b0ce] to-[#c5dcf5] pb-[3px]">
          <RecycleBin />
        </div>
        <Panel inactive className="flex-[754_1_0%]" />
      </main>
      <footer className="flex h-[22px] border-t border-[#6f93bd] bg-[#9fbddd] pt-px text-[12px]">
        <label htmlFor="command" className="w-[592px] pt-0.5 text-right text-[#1f3350]">
          D:\
        </label>
        <div className="ml-1 flex flex-1 items-center border-t border-l border-[#7a95b5] bg-[#e0f7ff] pr-1">
          <input id="command" aria-label="Командная строка" className="h-full flex-1 outline-none" />
          <svg width="10" height="6" viewBox="0 0 10 6">
            <path d="M1 .8l4 4 4-4" fill="none" stroke="#000" strokeWidth="1.800" />
          </svg>
        </div>
      </footer>
      <SearchDialog />
    </div>
  );
}
